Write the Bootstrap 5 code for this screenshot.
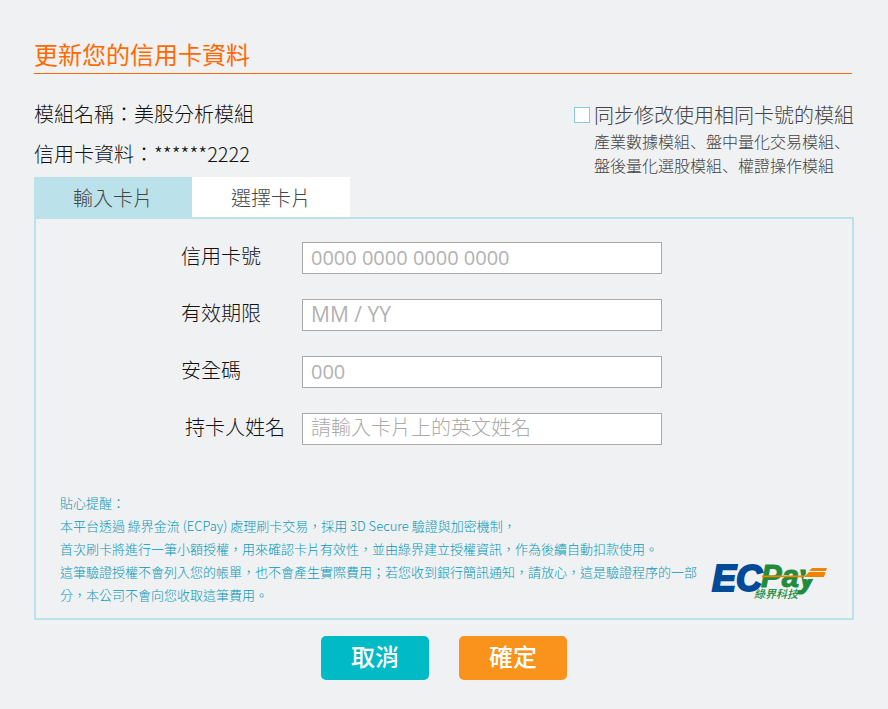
<!DOCTYPE html>
<html lang="zh-Hant">
<head>
<meta charset="utf-8">
<meta name="viewport" content="width=device-width, initial-scale=1">
<title>更新您的信用卡資料</title>
<link href="https://cdn.jsdelivr.net/npm/bootstrap@5.3.0/dist/css/bootstrap.min.css" rel="stylesheet">
<style>
  body { background: #eff1f3; color: #111; font-family: "Noto Sans CJK TC", sans-serif; font-weight: 300; font-size: 20px; line-height: 40px; }
  .page { padding: 36px 34px 28px; }
  .page-title { font-size: 24px; line-height: 35px; font-weight: 400; color: #ff6a00; border-bottom: 1px solid #ff6a00; padding-bottom: 2px; margin: 0 2px 20px 0; }
  .sync-box { color: #444; line-height: 24px; padding-top: 9px; font-family: "Noto Sans CJK JP", sans-serif; }
  .sync-box input { appearance: none; width: 16px; height: 16px; background: #fff; border: 1px solid #8cc8dc; margin: 0 4px 0 0; }
  .sync-box input:checked { background: #8cc8dc; }
  .sync-list { font-size: 16px; padding-left: 20px; margin-top: 2px; }
  .card-tabs .nav-link { width: 158px; height: 40px; padding: 2px 0 0; line-height: 38px; border: 0; border-radius: 0; color: #444; background: #fff; }
  .card-tabs .nav-link.active { background: #bbe1ea; }
  .panel { border: 2px solid #bbe1ea; padding: 23px 24px 12px; }
  .fields { display: grid; grid-template-columns: 121px minmax(0, 360px); row-gap: 25px; justify-content: center; padding-right: 45px; margin-bottom: 46px; }
  .fields label { line-height: 28px; }
  .fields input { height: 32px; border: 1px solid #aaa; border-radius: 0; padding: 0 8px 2px; font-size: 20px; line-height: 28px; font-weight: 300; }
  .fields input::placeholder { color: #aaa; }
  .fields .latin-input { font-family: "Open Sans", "Noto Sans CJK TC", sans-serif; font-weight: 400; }
  .fields .latin-input::placeholder { color: #b2b2b2; }
  .fields .date-input { font-size: 21px; }
  .fields .name-input { padding-bottom: 6px; line-height: 24px; }
  .notice { font-size: 13px; line-height: 23px; color: #0898b6; max-width: 640px; }
  .brand-logo { margin-bottom: 6px; overflow: visible; flex: none; }
  .actions { gap: 30px; }
  .act { width: 108px; height: 44px; border: 0; border-radius: 5px; padding: 0 0 4px; color: #fff; font-size: 24px; line-height: 40px; font-weight: 500; }
  .act-cancel { background: #00bac6; }
  .act-ok { background: #fa931c; }
</style>
<script src="https://cdn.jsdelivr.net/npm/bootstrap@5.3.0/dist/js/bootstrap.bundle.min.js"></script>
</head>
<body>
<main class="page">
  <h1 class="page-title">更新您的信用卡資料</h1>
  <div class="d-flex justify-content-between">
    <div>
      <div>模組名稱：美股分析模組</div>
      <div>信用卡資料：******2222</div>
    </div>
    <div class="sync-box">
      <div class="d-flex align-items-center">
        <input type="checkbox" id="sync"><label for="sync">同步修改使用相同卡號的模組</label>
      </div>
      <div class="sync-list" lang="ja">產業數據模組、盤中量化交易模組、<br>盤後量化選股模組、權證操作模組</div>
    </div>
  </div>
  <div class="nav card-tabs" role="tablist">
    <button type="button" class="nav-link active" role="tab" aria-selected="true">輸入卡片</button>
    <button type="button" class="nav-link" role="tab" aria-selected="false">選擇卡片</button>
  </div>
  <section class="panel">
    <form id="cardForm" class="fields">
      <label for="num">信用卡號</label><input class="form-control latin-input" id="num" placeholder="0000 0000 0000 0000">
      <label for="exp">有效期限</label><input class="form-control latin-input date-input" id="exp" placeholder="MM / YY">
      <label for="cvc">安全碼</label><input class="form-control latin-input" id="cvc" placeholder="000">
      <label for="holder" class="ps-1">持卡人姓名</label><input class="form-control name-input" id="holder" placeholder="請輸入卡片上的英文姓名">
    </form>
    <div class="d-flex justify-content-between align-items-end">
      <div class="notice">貼心提醒：<br>本平台透過 綠界金流 (ECPay) 處理刷卡交易，採用 3D Secure 驗證與加密機制，<br>首次刷卡將進行一筆小額授權，用來確認卡片有效性，並由綠界建立授權資訊，作為後續自動扣款使用。<br>這筆驗證授權不會列入您的帳單，也不會產生實際費用；若您收到銀行簡訊通知，請放心，這是驗證程序的一部分，本公司不會向您收取這筆費用。</div>
      <svg class="brand-logo" width="116" height="37" viewBox="0 0 116 37" role="img" aria-label="ECPay 綠界科技">
        <g font-family="Liberation Sans, Arial, sans-serif" font-style="italic" font-weight="700">
          <text x="0" y="28" font-size="36" fill="#004a97" stroke="#004a97" stroke-width="2">EC</text>
          <text x="49" y="24" font-size="31" fill="#228b3b" stroke="#228b3b" stroke-width="1">Pay</text>
        </g>
        <path d="M50 12.6H96V14.2H50Z" fill="#f08300"/>
        <path d="M98 3H116L112 16H91Z" fill="#eff1f3"/>
        <path d="M100 5H115L114 8H97ZM97 9H113.600L112 14H92Z" fill="#f08300"/>
        <text x="42" y="35" font-size="11" font-family="Noto Sans CJK TC, sans-serif" font-style="italic" font-weight="500" fill="#228b3b">綠界科技</text>
      </svg>
    </div>
  </section>
  <div class="actions d-flex justify-content-center mt-3">
    <button type="button" class="btn act act-cancel">取消</button>
    <button type="submit" form="cardForm" class="btn act act-ok">確定</button>
  </div>
</main>
</body>
</html>
